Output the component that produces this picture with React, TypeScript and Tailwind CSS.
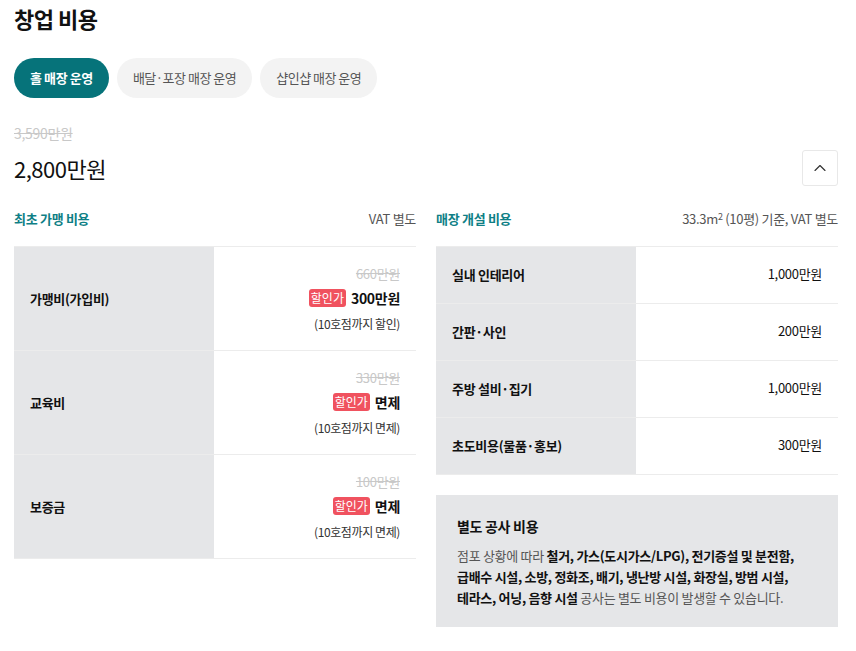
import { ChevronUp } from 'lucide-react'

const font = { fontFamily: '"Noto Sans CJK KR", "Noto Sans", sans-serif' }

const franchise = [
  { label: '가맹비(가입비)', origin: '660만원', price: '300만원', note: '(10호점까지 할인)' },
  { label: '교육비', origin: '330만원', price: '면제', note: '(10호점까지 면제)' },
  { label: '보증금', origin: '100만원', price: '면제', note: '(10호점까지 면제)' },
]

const opening = [
  { label: '실내 인테리어', price: '1,000만원' },
  { label: '간판·사인', price: '200만원' },
  { label: '주방 설비·집기', price: '1,000만원' },
  { label: '초도비용(물품·홍보)', price: '300만원' },
]

function SectionHead({ title, sub }: { title: string; sub: React.ReactNode }) {
  return (
    <div className="flex items-center justify-between h-[20px] mb-[17px]">
      <span className="text-[13px] font-bold text-[#0f7f86] tracking-[-0.3px]">{title}</span>
      <span className="text-[13px] text-[#555] tracking-[-0.3px]">{sub}</span>
    </div>
  )
}

export default function App() {
  return (
    <div className="bg-white w-[856px] h-[651px] pl-[14px] pr-[18px] text-[#111]" style={font}>
      <h1 className="text-[22px] font-bold leading-[34px] pt-[1px] tracking-[-0.5px]">창업 비용</h1>

      <div className="flex gap-2 mt-[23px]">
        <button className="h-[40px] px-[16px] rounded-full bg-[#06737a] text-white text-[13px] font-bold tracking-[-0.4px]">
          홀 매장 운영
        </button>
        <button className="h-[40px] px-[16px] rounded-full bg-[#f3f3f3] text-[#555] text-[13px] tracking-[-0.5px]">
          배달·포장 매장 운영
        </button>
        <button className="h-[40px] px-[16px] rounded-full bg-[#f3f3f3] text-[#555] text-[13px] tracking-[-0.5px]">
          샵인샵 매장 운영
        </button>
      </div>

      <div className="mt-[25px] text-[14px] leading-[20px] text-[#c8c8c8] line-through tracking-[-0.3px]">
        3,590만원
      </div>
      <div className="flex items-center justify-between h-[36px] mt-[7px]">
        <span className="text-[22px] leading-[30px] tracking-[-0.5px]">2,800만원</span>
        <button className="w-[36px] h-[36px] border border-[#e8e8e8] rounded-[3px] flex items-center justify-center">
          <ChevronUp size={20} strokeWidth={1.4} className="text-[#333]" />
        </button>
      </div>

      <div className="grid grid-cols-2 gap-[20px] mt-[23px]">
        <div>
          <SectionHead title="최초 가맹 비용" sub="VAT 별도" />
          <div className="border-t border-[#ececec]">
            {franchise.map((r) => (
              <div key={r.label} className="flex h-[104px] border-b border-[#ececec]">
                <div className="w-[200px] bg-[#e5e6e8] flex items-center pl-[16px] text-[13px] font-bold tracking-[-0.3px]">
                  {r.label}
                </div>
                <div className="flex-1 flex flex-col items-end justify-center pr-[16px]">
                  <span className="text-[13px] leading-[20px] text-[#c8c8c8] line-through tracking-[-0.3px]">
                    {r.origin}
                  </span>
                  <div className="flex items-center gap-[5px] mt-[4px]">
                    <span className="bg-[#f0525f] text-white text-[12px] leading-[18px] px-[2px] rounded-[3px]">
                      할인가
                    </span>
                    <span className="text-[14px] font-bold leading-[20px] tracking-[-0.3px]">{r.price}</span>
                  </div>
                  <span className="text-[12px] leading-[18px] text-[#333] mt-[7px] tracking-[-0.4px]">{r.note}</span>
                </div>
              </div>
            ))}
          </div>
        </div>

        <div>
          <SectionHead
            title="매장 개설 비용"
            sub={
              <>
                33.3m<sup className="text-[9px]">2</sup> (10평) 기준, VAT 별도
              </>
            }
          />
          <div className="border-t border-[#ececec]">
            {opening.map((r) => (
              <div key={r.label} className="flex h-[57px] border-b border-[#ececec]">
                <div className="w-[200px] bg-[#e5e6e8] flex items-center pl-[16px] text-[13px] font-bold tracking-[-0.3px]">
                  {r.label}
                </div>
                <div className="flex-1 flex items-center justify-end pr-[16px] text-[13px] pb-[3px] tracking-[-0.3px]">
                  {r.price}
                </div>
              </div>
            ))}
          </div>

          <div className="bg-[#e5e6e8] mt-[20px] px-[21px] pt-[20px] pb-[19px]">
            <div className="text-[14px] font-bold leading-[22px] tracking-[-0.3px]">별도 공사 비용</div>
            <p className="text-[13px] leading-[21px] text-[#555] mt-[8px] tracking-[-0.3px] break-keep">
              점포 상황에 따라{' '}
              <b className="text-[#111]">철거, 가스(도시가스/LPG), 전기증설 및 분전함,</b>{' '}
              <b className="text-[#111]">급배수 시설, 소방, 정화조, 배기, 냉난방 시설, 화장실, 방범 시설,</b>{' '}
              <b className="text-[#111]">테라스, 어닝, 음향 시설</b> 공사는 별도 비용이 발생할 수 있습니다.
            </p>
          </div>
        </div>
      </div>
    </div>
  )
}
